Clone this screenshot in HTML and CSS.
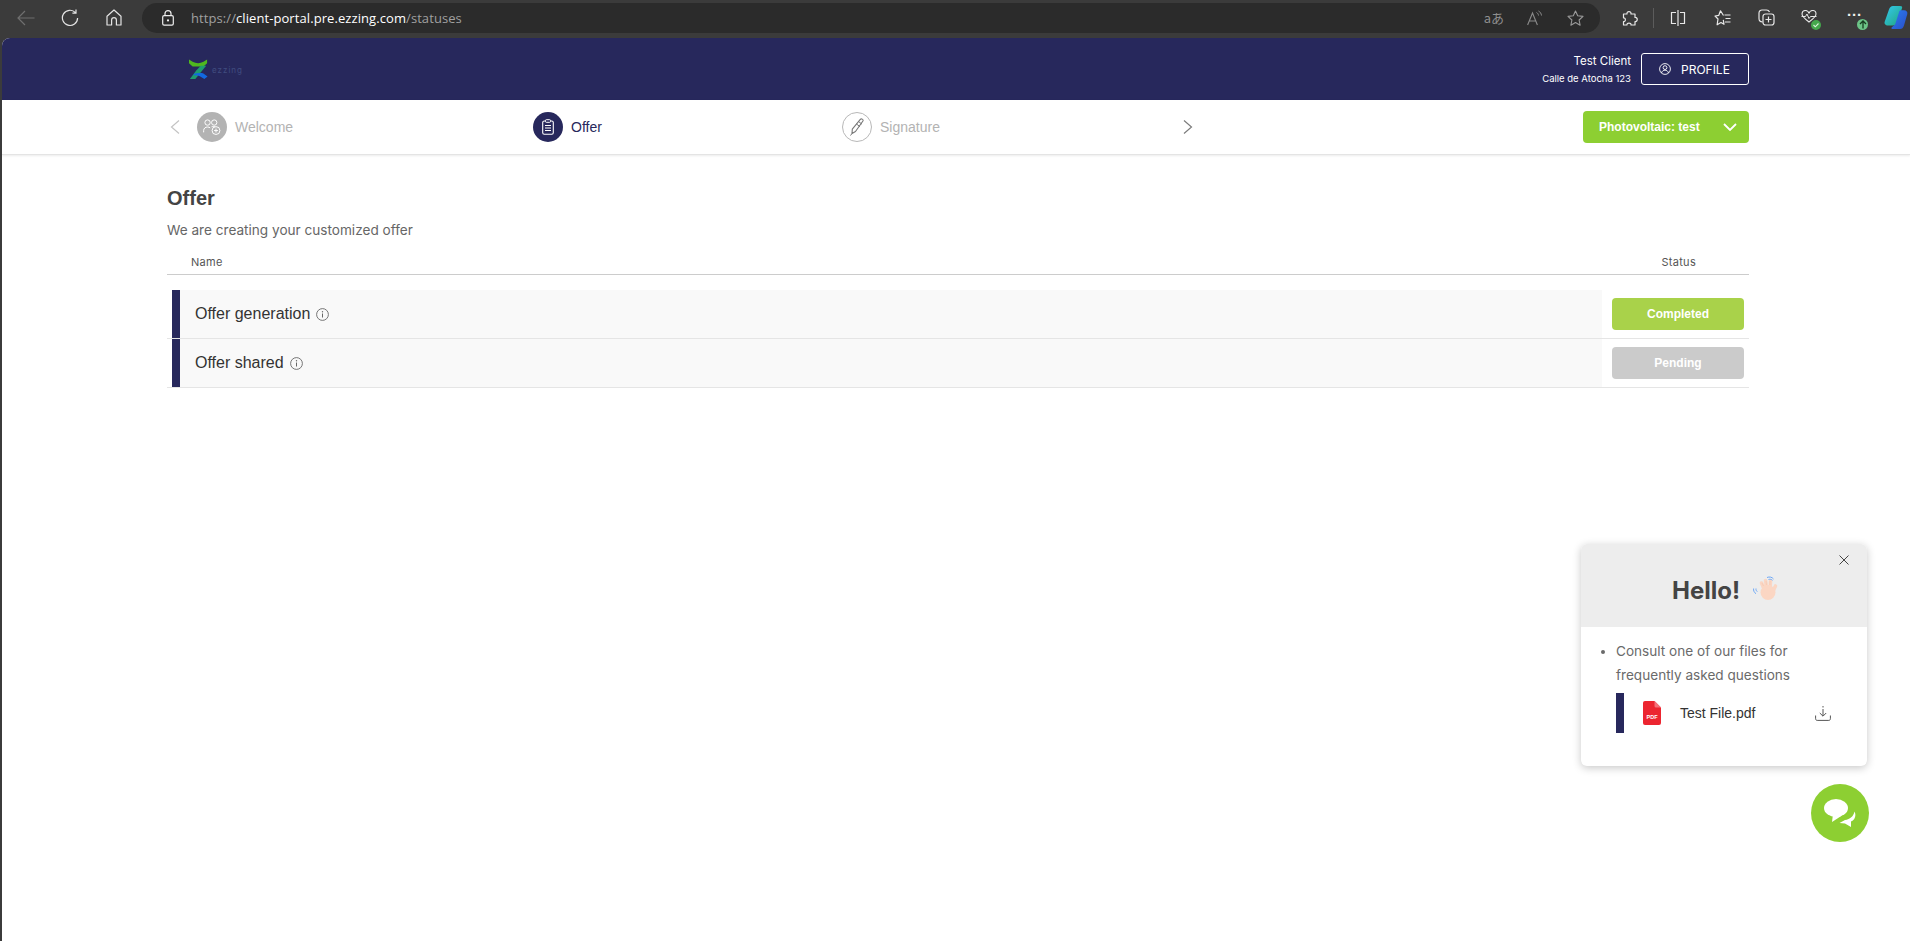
FILE: index.html
```html
<!DOCTYPE html>
<html lang="en">
<head>
<meta charset="utf-8">
<title>Offer</title>
<link rel="stylesheet" href="styles.css">
</head>
<body>
<div class="window">
  <div class="toolbar">
    <svg class="tb-icon back" width="18" height="16" viewBox="0 0 18 16"><path d="M17.5 8H1M8 1 1 8l7 7" fill="none" stroke="#6f6f6f" stroke-width="1.2"/></svg>
    <svg class="tb-icon reload" width="18" height="18" viewBox="0 0 18 18"><path d="M14.5 3.6A7.6 7.6 0 1 0 16.6 9M15 .5v3.6h-3.6" fill="none" stroke="#e4e4e4" stroke-width="1.2"/></svg>
    <svg class="tb-icon home" width="16" height="17" viewBox="0 0 16 17"><path d="M8 1 1 7.2V16h4.6v-5a2.4 2.4 0 0 1 4.8 0v5H15V7.2Z" fill="none" stroke="#e4e4e4" stroke-width="1.2" stroke-linejoin="round"/></svg>
    <div class="addressbar">
      <svg class="lock" width="12" height="16" viewBox="0 0 12 16"><path d="M3 6V3.6a3 3 0 0 1 6 0V6" fill="none" stroke="#eee" stroke-width="1.2"/><rect x=".7" y="5.6" width="10.6" height="9.6" rx="1.4" fill="none" stroke="#eee" stroke-width="1.2"/><circle cx="6" cy="10.4" r="1.1" fill="#eee"/></svg>
      <div class="url"><span class="url-dim">https://</span><span class="url-main">client-portal.pre.ezzing.com</span><span class="url-dim">/statuses</span></div>
      <div class="addr-right">
        <span class="translate">aあ</span>
        <svg class="read" width="16" height="16" viewBox="0 0 16 16"><path d="M.6 15 5.500 3l4.900 12M2.300 11h6.400" fill="none" stroke="#8a8a8a" stroke-width="1.100"/><path d="M9.500 2.500c1.200.6 1.900 1.700 2 3M11.500 1c1.700.9 2.800 2.500 3 4.500" fill="none" stroke="#8a8a8a" stroke-width="1"/></svg>
        <svg class="star" width="17" height="16" viewBox="0 0 17 16"><path d="m8.500 1 2.200 4.800 5.300.6-3.900 3.600 1 5.200-4.600-2.600-4.600 2.600 1-5.200L1 6.400l5.300-.6Z" fill="none" stroke="#9a9a9a" stroke-width="1.1" stroke-linejoin="round"/></svg>
      </div>
    </div>
    <svg class="ext" width="16" height="16" viewBox="0 0 16 16"><path d="M1.500 4H5C4.500 .8 9.500 .8 9 4h4v3.500c3-.5 3 4.500 0 4V15H9c.6-2.500-4.600-2.500-4 0H1.500v-3.500c2.500.5 2.500-4 0-3.500Z" fill="none" stroke="#e8e8e8" stroke-width="1.200" stroke-linejoin="round"/></svg>
    <span class="tb-sep"></span>
    <svg class="split" width="16" height="16" viewBox="0 0 16 16"><path d="M8 0v16M6 2.500H1.500v11H6M10 2.500h4.500v11H10" fill="none" stroke="#e8e8e8" stroke-width="1.2"/></svg>
    <svg class="favs" width="17" height="16" viewBox="0 0 17 16"><path d="M9.500 5.500 6.500 .8 4.800 5.300 1 6l3 3-.9 5.800L7 12.500l3 1.800-.7-4.500" fill="none" stroke="#e8e8e8" stroke-width="1.200" stroke-linejoin="round"/><path d="M10.500 5h6M11.500 8.500h5M11 12h5.500" stroke="#e8e8e8" stroke-width="1.100"/></svg>
    <svg class="coll" width="17" height="17" viewBox="0 0 17 17"><path d="M4.500 13C2 13 1 11.500 1 9.500V4c0-2 1.500-3 3-3h4.500c1.500 0 2.500.7 3 2" fill="none" stroke="#e8e8e8" stroke-width="1.2"/><rect x="5" y="5" width="11" height="11" rx="2.500" fill="none" stroke="#e8e8e8" stroke-width="1.2"/><path d="M10.500 7.500v6M7.500 10.500h6" stroke="#e8e8e8" stroke-width="1.2"/></svg>
    <div class="health">
      <svg width="16" height="14" viewBox="0 0 16 14"><path d="M8 3C6.500-.5 1.200-.5 1 4c0 2.500 3 5 7 8 4-3 7-5.500 7-8 0-4.500-5.500-4.500-7-1Z" fill="none" stroke="#e8e8e8" stroke-width="1.100"/><path d="M.5 6.500h4l1.500-2.500 2 4.500 1.500-2h6" fill="none" stroke="#e8e8e8" stroke-width="1"/></svg>
      <span class="health-dot"><svg width="8" height="8" viewBox="0 0 8 8"><path d="m1.500 4 1.800 1.800L6.500 2.500" fill="none" stroke="#d8f5d8" stroke-width="1.100"/></svg></span>
    </div>
    <div class="more">
      <span class="dots">···</span>
      <span class="more-dot"><svg width="8" height="9" viewBox="0 0 8 9"><path d="M4 8.500V1M1 4l3-3 3 3" fill="none" stroke="#173d21" stroke-width="1.300"/></svg></span>
    </div>
    <svg class="copilot" width="24" height="25" viewBox="0 0 24 28" preserveAspectRatio="none"><defs><linearGradient id="cpa" x1="0" y1="0" x2="1" y2="1"><stop offset="0" stop-color="#35c8f2"/><stop offset="1" stop-color="#1fa67c"/></linearGradient><linearGradient id="cpb" x1="0" y1="0" x2="1" y2="1"><stop offset="0" stop-color="#2a7df0"/><stop offset="1" stop-color="#2b4fc7"/></linearGradient></defs><path d="M9 1h7c2 0 2.500 1 2 2.500L13 20c-.6 2-2 3-4 3H4c-2.500 0-4-2-3.300-4.200L5 5c.8-2.500 2-4 4-4Z" fill="url(#cpa)"/><path d="M17 6h3c2.500 0 3.800 2 3.300 4.200L20 23c-.8 2.700-2 4-4 4H9c-1.600 0-2-1.300-1-2.500 1.500-1 3-2 3.500-4L15 8c.3-1.300 1-2 2-2Z" fill="url(#cpb)"/></svg>
  </div>

  <div class="page">
    <header class="topbar">
      <div class="logo">
        <svg width="19" height="20" viewBox="0 0 21 21" preserveAspectRatio="none"><path d="M0 0.500 4 3c4 2 8 2 12 0l4-2.500v4L16 8H4L0 4.500Z" fill="#4fb81e"/><path d="M13 7h6L7 21H1L8 12Z" fill="#1f9c6f"/><path d="M5.500 15.500c4-1 7-1 10-.5l5 3.500-3.500 2.500-5-3c-2-1-5-1.200-7-.8Z" fill="#1268e0"/></svg>
        <span class="logo-text">ezzing</span>
      </div>
      <div class="client">
        <div class="client-name">Test Client</div>
        <div class="client-addr">Calle de Atocha 123</div>
      </div>
      <button class="profile-btn">
        <svg width="12" height="12" viewBox="0 0 12 12"><circle cx="6" cy="6" r="5.400" fill="none" stroke="#fff" stroke-width=".9"/><circle cx="6" cy="4.600" r="1.900" fill="none" stroke="#fff" stroke-width=".9"/><path d="M2.500 10c.4-2 2-2.800 3.500-2.800S9.100 8 9.500 10" fill="none" stroke="#fff" stroke-width=".9"/></svg>
        <span>PROFILE</span>
      </button>
    </header>

    <nav class="stepbar">
      <svg class="chev" width="10" height="14" viewBox="0 0 10 14"><path d="M9 .5 1.500 7 9 13.500" fill="none" stroke="#c4c4c4" stroke-width="1.200"/></svg>
      <div class="step step-a">
        <span class="step-circle done">
          <svg width="18" height="16" viewBox="0 0 20 18"><circle cx="5" cy="4" r="3" fill="none" stroke="#fff" stroke-width="1.100"/><circle cx="12.500" cy="4" r="3" fill="none" stroke="#fff" stroke-width="1.100"/><path d="M.6 15v-2c0-2.500 2-4 4.400-4 1.200 0 2.200.4 3 1M9.500 8.800c1-.5 2.800-.6 4 0" fill="none" stroke="#fff" stroke-width="1.100"/><circle cx="14.500" cy="13" r="4.400" fill="none" stroke="#fff" stroke-width="1.100"/><path d="M14.500 10.800v4.400M12.300 13h4.400" stroke="#fff" stroke-width="1.100"/></svg>
        </span>
        <span class="step-label muted">Welcome</span>
      </div>
      <div class="step step-b">
        <span class="step-circle active">
          <svg width="12" height="16" viewBox="0 0 12 16"><rect x=".7" y="2" width="10.600" height="13.300" rx="1.600" fill="none" stroke="#fff" stroke-width="1.100"/><rect x="3.500" y=".7" width="5" height="2.600" rx=".8" fill="#27285c" stroke="#fff" stroke-width="1"/><path d="M3 6.500h6M3 9h6M3 11.500h6" stroke="#fff" stroke-width="1"/></svg>
        </span>
        <span class="step-label current">Offer</span>
      </div>
      <div class="step step-c">
        <span class="step-circle todo">
          <svg width="16" height="18" viewBox="0 0 16 18"><path d="M11.500 1.200c1-.8 2.800.1 2.600 1.500L6.500 13.500 3 15.500l.3-4.300Z" fill="none" stroke="#777" stroke-width="1.100" stroke-linejoin="round"/><path d="M9.500 3.500l3.500 2.700M7.500 6l3.500 2.700M3 15.500l-1.500 2" fill="none" stroke="#777" stroke-width="1"/></svg>
        </span>
        <span class="step-label muted">Signature</span>
      </div>
      <svg class="chev" width="10" height="14" viewBox="0 0 10 14"><path d="M1 .5 8.500 7 1 13.500" fill="none" stroke="#7c7c7c" stroke-width="1.200"/></svg>
      <button class="project-btn">
        <span>Photovoltaic: test</span>
        <svg width="14" height="8" viewBox="0 0 14 8"><path d="m1 1 6 6 6-6" fill="none" stroke="#fff" stroke-width="1.800"/></svg>
      </button>
    </nav>

    <main class="content">
      <h1 class="title">Offer</h1>
      <p class="subtitle">We are creating your customized offer</p>
      <div class="table-head">
        <span>Name</span>
        <span class="head-status">Status</span>
      </div>
      <div class="row row-first">
        <div class="row-main">
          <span class="row-name">Offer generation</span>
          <svg class="info" width="13" height="13" viewBox="0 0 13 13"><circle cx="6.500" cy="6.500" r="5.900" fill="none" stroke="#666" stroke-width=".9"/><path d="M6.500 5.500v4" stroke="#666"/><circle cx="6.500" cy="3.700" r=".7" fill="#666"/></svg>
        </div>
        <div class="row-status"><span class="badge completed">Completed</span></div>
      </div>
      <div class="row">
        <div class="row-main">
          <span class="row-name">Offer shared</span>
          <svg class="info" width="13" height="13" viewBox="0 0 13 13"><circle cx="6.500" cy="6.500" r="5.900" fill="none" stroke="#666" stroke-width=".9"/><path d="M6.500 5.500v4" stroke="#666"/><circle cx="6.500" cy="3.700" r=".7" fill="#666"/></svg>
        </div>
        <div class="row-status"><span class="badge pending">Pending</span></div>
      </div>
    </main>
  </div>

  <aside class="help-card">
    <div class="help-head">
      <span class="hello">Hello!</span>
      <svg class="wave" width="25" height="25" viewBox="0 0 25 25"><circle cx="15" cy="16.500" r="7.500" fill="#fbd6c3"/><path d="M12 15 8.500 7M14 14 12.500 4.500M17 14l.5-9M20 15l2.500-5" fill="none" stroke="#fbd6c3" stroke-width="3.600" stroke-linecap="round"/><path d="M10.500 10 9 7M13.500 9 13 5M16.800 9l.3-4" fill="none" stroke="#f2c4ad" stroke-width=".6"/><path d="M14 1.500c2.500-1 5-.5 6.500 1.500M15.500 3.500c1.500-.5 3-.2 4 .8M.6 12.500c-.3 2 .5 4 2.400 5.200M3 12.500c-.2 1.300.3 2.400 1.300 3.200" fill="none" stroke="#6fa8f5" stroke-width="1"/></svg>
      <svg class="close" width="10" height="10" viewBox="0 0 10 10"><path d="m.5.500 9 9M9.500.500l-9 9" stroke="#444" stroke-width="1"/></svg>
    </div>
    <div class="help-body">
      <ul class="help-list"><li>Consult one of our files for frequently asked questions</li></ul>
      <div class="file-row">
        <svg class="pdf" width="18" height="24" viewBox="0 0 18 24"><path d="M2 0h9.500L18 6.500V22a2 2 0 0 1-2 2H2a2 2 0 0 1-2-2V2a2 2 0 0 1 2-2Z" fill="#ec2530"/><path d="M11.500 0 18 6.500h-5a1.500 1.500 0 0 1-1.500-1.500Z" fill="#f4727a"/><text x="9" y="17.500" text-anchor="middle" class="pdf-text">PDF</text></svg>
        <span class="file-name">Test File.pdf</span>
        <svg class="download" width="16" height="15" viewBox="0 0 16 15"><path d="M8 0v1.500M8 3v7M4.800 7 8 10.200 11.200 7" fill="none" stroke="#555" stroke-width="1"/><path d="M.6 9.500v3.200c0 1 .6 1.700 1.600 1.700h11.600c1 0 1.600-.7 1.600-1.700V9.500" fill="none" stroke="#555" stroke-width="1"/></svg>
      </div>
    </div>
  </aside>
  <button class="chat-btn">
    <svg width="32" height="28" viewBox="0 0 32 28"><ellipse cx="12" cy="9" rx="12" ry="9" fill="#fff"/><path d="M9 15 8 23l10-6.500Z" fill="#fff"/><path d="M30.500 12.500c2 3.500.5 8.500-3.500 10v5.500l-6-3.500-5.500-.5 5.500-3c5-.7 8.500-3.500 9.500-8.500Z" fill="#fff"/></svg>
  </button>
</div>
</body>
</html>
```
FILE: styles.css
```css
* { box-sizing: border-box; }
html, body { margin: 0; height: 100%; overflow: hidden; }
body { font-family: "Liberation Sans", Arial, sans-serif; background: #3b3b3b; }
.window { position: relative; width: 1910px; height: 941px; display: flex; flex-direction: column; overflow: hidden; }

/* browser chrome */
.toolbar { height: 38px; flex: none; display: flex; align-items: center; background: #3b3b3b; padding-bottom: 3px; }
.back { margin-left: 17px; }
.reload { margin-left: 26px; }
.home { margin-left: 27px; }
.addressbar { margin-left: 20px; width: 1458px; height: 30px; border-radius: 15px; background: #2b2b2b; display: flex; align-items: center; padding: 0 16px 0 20px; }
.url { margin-left: 17px; font-family: "Open Sans", sans-serif; font-size: 13px; letter-spacing: .08px; white-space: nowrap; }
.url-dim { color: #a0a0a0; }
.url-main { color: #fff; }
.addr-right { margin-left: auto; display: flex; align-items: center; }
.translate { font-family: "Noto Sans CJK JP", "Open Sans", sans-serif; font-size: 13px; color: #8e8e8e; line-height: 16px; }
.read { margin-left: 23px; }
.star { margin-left: 24px; }
.ext { margin-left: 22px; }
.tb-sep { margin-left: 15px; width: 1px; height: 20px; background: #5c5c5c; }
.split { margin-left: 16px; }
.favs { margin-left: 28px; }
.coll { margin-left: 27px; }
.health { margin-left: 26px; width: 19px; height: 20px; position: relative; display: flex; padding-top: 2px; }
.health-dot { position: absolute; right: -1px; bottom: -2px; width: 10px; height: 10px; border-radius: 50%; background: #45a84c; display: flex; align-items: center; justify-content: center; }
.more { margin-left: 27px; width: 21px; height: 20px; position: relative; }
.dots { position: absolute; left: 0; top: -3px; color: #f0f0f0; font-size: 15px; font-weight: bold; line-height: 20px; letter-spacing: 0; }
.more-dot { position: absolute; right: 0; bottom: -2px; width: 11px; height: 11px; border-radius: 50%; background: #6cc487; display: flex; align-items: center; justify-content: center; }
.copilot { margin-left: 16px; }

/* page */
.page { flex: 1; margin-left: 2px; background: #fff; border-radius: 8px 0 0 0; overflow: hidden; display: flex; flex-direction: column; }
.topbar { height: 62px; flex: none; background: #27285c; display: flex; align-items: center; padding: 0 161px 0 187px; color: #fff; }
.logo { display: flex; align-items: center; }
.logo-text { margin-left: 4px; margin-top: 2px; font-family: "Inter", sans-serif; font-size: 8px; letter-spacing: 1px; color: #414d80; }
.client { margin-left: auto; text-align: right; font-family: "Inter", sans-serif; padding-top: 1px; }
.client-name { font-size: 11.500px; line-height: 17px; }
.client-addr { font-size: 9.500px; line-height: 14px; margin-top: 2px; }
.profile-btn { margin-left: 10px; width: 108px; height: 32px; background: transparent; border: 1px solid #fff; border-radius: 3px; color: #fff; display: flex; align-items: center; padding: 0 0 0 17px; gap: 10px; font-family: "Inter", sans-serif; font-size: 12px; }

.stepbar { height: 55px; flex: none; display: flex; align-items: center; padding: 0 161px 1px 168px; border-bottom: 1px solid #e4e4e4; box-shadow: 0 1px 2px rgba(0,0,0,.08); position: relative; }
.step { display: flex; align-items: center; }
.step-a { margin-left: 17px; width: 336px; }
.step-b { width: 309px; }
.step-c { width: 341px; }
.step-circle { width: 30px; height: 30px; border-radius: 50%; display: flex; align-items: center; justify-content: center; flex: none; }
.done { background: #b3b3b3; }
.active { background: #27285c; }
.todo { border: 1px solid #b8b8b8; background: #fff; }
.step-label { margin-left: 8px; font-size: 14px; }
.muted { color: #b3b3b3; }
.current { color: #27285c; }
.project-btn { margin-left: auto; width: 166px; height: 32px; border: 0; border-radius: 4px; background: #8dcf32; color: #fff; font-family: "Liberation Sans", Arial, sans-serif; font-weight: bold; font-size: 12px; display: flex; align-items: center; padding: 0 12px 0 16px; justify-content: space-between; }

.content { padding: 0 161px 0 165px; }
.title { margin: 31px 0 0; font-size: 20px; line-height: 24px; font-weight: bold; color: #444; }
.subtitle { margin: 10px 0 0; font-family: "Inter", sans-serif; font-size: 13.600px; line-height: 20px; color: #666; }
.table-head { margin-top: 10px; height: 25px; display: flex; justify-content: space-between; align-items: center; padding: 0 53px 1px 24px; border-bottom: 1px solid #ccc; font-family: "Inter", sans-serif; font-size: 11px; letter-spacing: .3px; color: #555; }
.row { display: flex; height: 49px; padding-left: 5px; border-bottom: 1px solid #e5e5e5; }
.row-first { margin-top: 15px; }
.row-main { flex: 1; display: flex; align-items: center; gap: 6px; background: #f9f9f9; border-left: 8px solid #27285c; padding-left: 15px; }
.row-name { font-size: 16px; color: #333; }
.row-status { width: 147px; padding: 8px 0 0 10px; }
.badge { display: flex; align-items: center; justify-content: center; width: 132px; height: 32px; border-radius: 4px; color: #fff; font-weight: bold; font-size: 12px; }
.completed { background: #a9d24a; }
.pending { background: #cbcbcb; }

/* floating help widget */
.help-card { position: absolute; left: 1581px; top: 544px; width: 286px; height: 222px; background: #fff; border-radius: 6px; overflow: hidden; box-shadow: 0 2px 8px rgba(0,0,0,.22); }
.help-head { position: relative; height: 83px; background: #ededed; display: flex; align-items: center; padding: 9px 0 0 91px; }
.hello { font-family: "Inter", sans-serif; font-weight: 700; font-size: 24px; color: #444; }
.wave { margin-left: 13px; margin-top: -3px; }
.close { position: absolute; right: 18px; top: 11px; }
.help-body { padding: 12px 36px 0 35px; }
.help-list { margin: 0; padding: 0; font-family: "Inter", sans-serif; font-size: 13.600px; line-height: 24px; color: #6a6a6a; }
.help-list li { margin: 0; }
.file-row { margin-top: 6px; height: 40px; border-left: 8px solid #27285c; display: flex; align-items: center; padding-left: 19px; }
.pdf-text { font-family: "Liberation Sans", Arial, sans-serif; font-size: 5.500px; font-weight: bold; fill: #fff; }
.file-name { margin-left: 19px; font-size: 14px; color: #333; }
.download { margin-left: auto; }
.chat-btn { position: absolute; left: 1811px; top: 784px; width: 58px; height: 58px; border: 0; padding: 0; border-radius: 50%; background: #8dcf32; display: flex; align-items: center; justify-content: center; }
```
